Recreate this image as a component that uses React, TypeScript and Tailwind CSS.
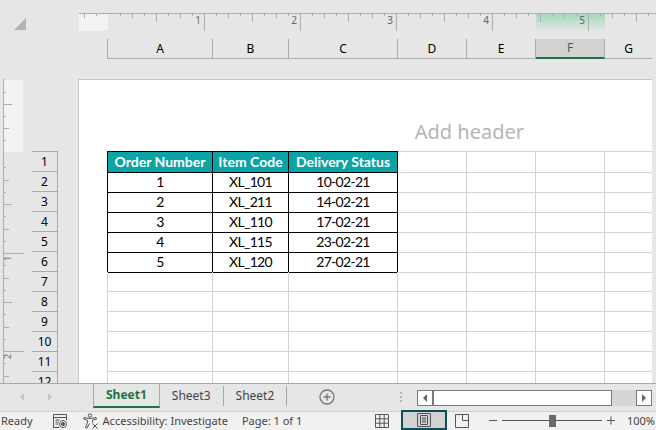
import React from 'react';

// column template shared by the column headers and the sheet rows
const COLS = 'grid grid-cols-[106px_76px_109px_69px_69px_69px_1fr]';
const LETTERS = ['A', 'B', 'C', 'D', 'E', 'F', 'G'];

const tableRows = [
  ['Order Number', 'Item Code', 'Delivery Status'],
  ['1', 'XL_101', '10-02-21'],
  ['2', 'XL_211', '14-02-21'],
  ['3', 'XL_110', '17-02-21'],
  ['4', 'XL_115', '23-02-21'],
  ['5', 'XL_120', '27-02-21'],
];

const rowNumbers = [1, 2, 3, 4, 5, 6, 7, 8, 9, 10, 11, 12];

const TopRuler = () => {
  const ticks: number[] = [];
  for (let x = 84; x < 656; x += 12) ticks.push(x);
  return (
    <svg className="block h-5 w-full" viewBox="0 0 656 20">
      <defs>
        <linearGradient id="sel" x1="0" y1="0" x2="0" y2="1">
          <stop offset="0" stopColor="#a3d8bb" />
          <stop offset="1" stopColor="#e6e6e6" />
        </linearGradient>
      </defs>
      <polygon points="26,6 26,18 14,18" fill="#b4b4b4" />
      <rect x="79" y="2" width="29" height="17" fill="#f2f2f2" />
      <rect x="536" y="2" width="69" height="17" fill="url(#sel)" />
      <rect x="79" y="1" width="577" height="1" fill="#aeaeae" />
      {ticks.map((x) => {
        const off = (x - 108) / 12;
        if (off === 0) return null;
        let h = 2;
        if (off % 8 === 0) h = 17;
        else if (off % 4 === 0) h = 8;
        else if (off % 2 === 0) h = 4;
        return <rect key={x} x={x} y="2" width="1" height={h} fill="#aeaeae" />;
      })}
      {[1, 2, 3, 4, 5].map((n) => (
        <text key={n} x={108 + 96 * n - 3} y="12" textAnchor="end" fontSize="10" fill="#666" fontFamily="Noto Sans, sans-serif">
          {n}
        </text>
      ))}
    </svg>
  );
};

const LeftRuler = () => {
  const top = [
    [92, 2],
    [104, 8],
    [116, 2],
    [128, 5],
    [140, 2],
  ];
  const rest: number[][] = [];
  for (let k = 1; k < 19; k++) {
    const y = Math.round(155 + k * 12.25);
    let w = 2;
    if (k % 8 === 0) w = 20;
    else if (k % 4 === 0) w = 8;
    else if (k % 2 === 0) w = 5;
    rest.push([y, w]);
  }
  return (
    <svg className="block h-[304px] w-8 shrink-0" viewBox="0 79 32 304">
      <rect x="4" y="80" width="19" height="72" fill="#f2f2f2" />
      <rect x="3" y="79" width="1" height="304" fill="#aeaeae" />
      {[...top, ...rest].map(([y, w]) => (
        <rect key={y} x="4" y={y} width={w} height="1" fill="#aeaeae" />
      ))}
      <text transform="translate(11 261) rotate(-90)" fontSize="9" fill="#666" fontFamily="Noto Sans, sans-serif">1</text>
      <text transform="translate(11 359) rotate(-90)" fontSize="9" fill="#666" fontFamily="Noto Sans, sans-serif">2</text>
    </svg>
  );
};

const SheetRow = ({ row }: { row: number }) => {
  const data = tableRows[row];
  return (
    <div className={`${COLS} ${row === 0 ? 'h-[21px]' : 'h-5'}`}>
      {LETTERS.map((letter, col) => {
        const inTable = !!data && col < 3;
        const head = row === 0 && col < 3;
        return (
          <div
            key={letter}
            className={`flex items-center justify-center border-b ${col < 6 ? 'border-r' : ''} ${col === 0 ? 'border-l' : ''} ${
              row === 0 ? 'border-t' : ''
            } ${inTable ? 'border-black' : 'border-[#d4d4d4]'} ${
              head ? 'bg-[#0ca3a4] font-bold text-white' : 'tracking-tighter text-black'
            }`}
          >
            {inTable ? data[col] : ''}
          </div>
        );
      })}
    </div>
  );
};

const MacroIcon = () => (
  <svg className="h-3.5 w-3.5" viewBox="0 0 14 14" fill="none" stroke="#555">
    <path d="M13.5 6V.5H.5v13h6M.5 3.5h13M2.5 6h4M2.5 8h3M2.5 10h3" />
    <circle cx="10" cy="10" r="3.5" />
    <circle cx="10" cy="10" r="1.5" fill="#555" />
  </svg>
);

const AccessibilityIcon = () => (
  <svg className="h-4 w-4" viewBox="0 0 16 16" fill="none" stroke="#555" strokeLinejoin="round">
    <circle cx="7" cy="2.5" r="1.7" />
    <path d="M1 4.5l4 .8h4l4-.8.5 1.5L9.5 7.2v2.3M1 4.5L.5 6l4 1.2v2.5L2.5 14.5l1.5.5 2.5-4.5" />
    <path d="M9.5 10.5l5 5M14.5 10.5l-5 5" />
  </svg>
);

const GridIcon = () => (
  <svg className="h-3.5 w-3.5" viewBox="0 0 14 14" fill="none" stroke="#555">
    <path d="M.5.5h13v13H.5zM.5 4.8h13M.5 9.2h13M4.8.5v13M9.2.5v13" />
  </svg>
);

const PageIcon = () => (
  <svg className="h-3.5 w-3.5" viewBox="0 0 14 14" fill="none" stroke="#555">
    <path d="M.5.5h13v13H.5zM3.5 2.5h7v9h-7zM5 5h4M5 7h4M5 9h4" />
  </svg>
);

const BreakIcon = () => (
  <svg className="h-3.5 w-3.5" viewBox="0 0 14 14" fill="none" stroke="#555">
    <path d="M.5.5h13v13H.5zM7.5.5v6h6" />
  </svg>
);

const App = () => {
  return (
    <div
      className="flex h-[430px] w-[656px] flex-col overflow-hidden bg-[#e6e6e6]"
      style={{ fontFamily: '"Noto Sans", sans-serif' }}
    >
      {/* rulers and column letters */}
      <div className="flex h-[79px] shrink-0 flex-col justify-between pt-3 pb-5">
        <TopRuler />
        <div className={`${COLS} h-5 pl-[107px] pr-1 text-xs text-black`}>
          {LETTERS.map((letter, i) => (
            <div
              key={letter}
              className={`flex items-center justify-center border-b border-[#ababab] ${i < 6 ? 'border-r' : ''} ${
                i === 0 ? 'border-l' : ''
              } ${letter === 'F' ? 'border-b-2 border-b-[#217346] bg-[#d2d2d2] text-[#217346]' : ''}`}
            >
              {letter}
            </div>
          ))}
        </div>
      </div>

      {/* sheet */}
      <div className="flex min-h-0 flex-1 overflow-hidden pr-1">
        <div className="flex w-[78px] shrink-0">
          <LeftRuler />
          <div className="mr-5 flex-1 pt-18">
            {rowNumbers.map((n) => (
              <div
                key={n}
                className={`flex items-center justify-center border-r border-b border-[#ababab] text-xs text-black ${
                  n === 1 ? 'h-[21px] border-t' : 'h-5'
                }`}
              >
                {n}
              </div>
            ))}
          </div>
        </div>
        <div className="flex-1 border-t border-l border-[#c6c6c6] bg-white pl-7">
          <div className="-mb-px flex h-18 items-end justify-end pr-32 pb-1.5 text-xl text-[#b5b5b5]">Add header</div>
          <div className="text-sm" style={{ fontFamily: 'Lato, sans-serif' }}>
            {rowNumbers.map((_, i) => (
              <SheetRow key={i} row={i} />
            ))}
          </div>
        </div>
      </div>

      {/* sheet tabs */}
      <div className="flex h-7 shrink-0 border-t border-[#a8a8a8] pr-1 text-xs text-[#444]">
        <div className="flex w-[93px] items-center gap-6 pl-5 pb-0.5">
          <span className="h-0 w-0 border-y-4 border-r-4 border-y-transparent border-r-[#c4c4c4]" />
          <span className="h-0 w-0 border-y-4 border-l-4 border-y-transparent border-l-[#c4c4c4]" />
        </div>
        <div className="flex h-6 items-center border-x border-b-2 border-x-[#a8a8a8] border-b-[#217346] px-3 font-bold text-[#217346]">
          Sheet1
        </div>
        <div className="my-0.5 flex h-5 items-center border-r border-[#a8a8a8] px-3">Sheet3</div>
        <div className="my-0.5 flex h-5 items-center border-r border-[#a8a8a8] px-3">Sheet2</div>
        <div className="ml-8 flex items-center pb-0.5">
          <svg className="h-4 w-4" viewBox="0 0 16 16" fill="none" stroke="#777" strokeWidth="1.3">
            <circle cx="8" cy="8" r="7" />
            <path d="M8 4.5v7M4.5 8h7" />
          </svg>
        </div>
        <div className="ml-16 flex w-1 flex-col items-center justify-center gap-0.5 pb-0.5">
          <span className="h-0.5 w-0.5 bg-[#b4b4b4]" />
          <span className="h-0.5 w-0.5 bg-[#b4b4b4]" />
          <span className="h-0.5 w-0.5 bg-[#b4b4b4]" />
        </div>
        <div className="ml-3.5 flex h-4 flex-1 self-center">
          <div className="flex w-4 items-center justify-center border border-[#7a7a7a] bg-white">
            <span className="h-0 w-0 border-y-4 border-r-4 border-y-transparent border-r-[#666]" />
          </div>
          <div className="flex-1 border border-[#7a7a7a] bg-white" />
          <div className="w-6 bg-[#d6d6d6]" />
          <div className="flex w-4 items-center justify-center border border-[#7a7a7a] bg-white">
            <span className="h-0 w-0 border-y-4 border-l-4 border-y-transparent border-l-[#666]" />
          </div>
        </div>
      </div>

      {/* status bar */}
      <div className="flex h-[19px] shrink-0 items-center border-t border-[#d2d2d2] bg-[#f1f1f1] pr-px text-[11px] text-[#444]">
        <span className="pl-px">Ready</span>
        <span className="ml-5">
          <MacroIcon />
        </span>
        <span className="ml-4">
          <AccessibilityIcon />
        </span>
        <span className="ml-1">Accessibility: Investigate</span>
        <span className="ml-3.5">Page: 1 of 1</span>

        <span className="mr-3 ml-auto">
          <GridIcon />
        </span>
        <span className="-mt-0.5 flex items-center self-stretch border-2 border-[#0b5057] bg-[#d2d2d2] px-3.5">
          <PageIcon />
        </span>
        <span className="ml-2">
          <BreakIcon />
        </span>
        <svg className="ml-5 h-3.5 w-32" viewBox="0 0 128 14">
          <rect x="0" y="6" width="8" height="1" fill="#555" />
          <rect x="13" y="6" width="100" height="1" fill="#555" />
          <rect x="60" y="1" width="7" height="12" fill="#6a6a6a" />
          <path d="M118 6.5h8M122 2.5v8" stroke="#555" />
        </svg>
        <span className="ml-2.5">100%</span>
      </div>
    </div>
  );
};

export default App;
